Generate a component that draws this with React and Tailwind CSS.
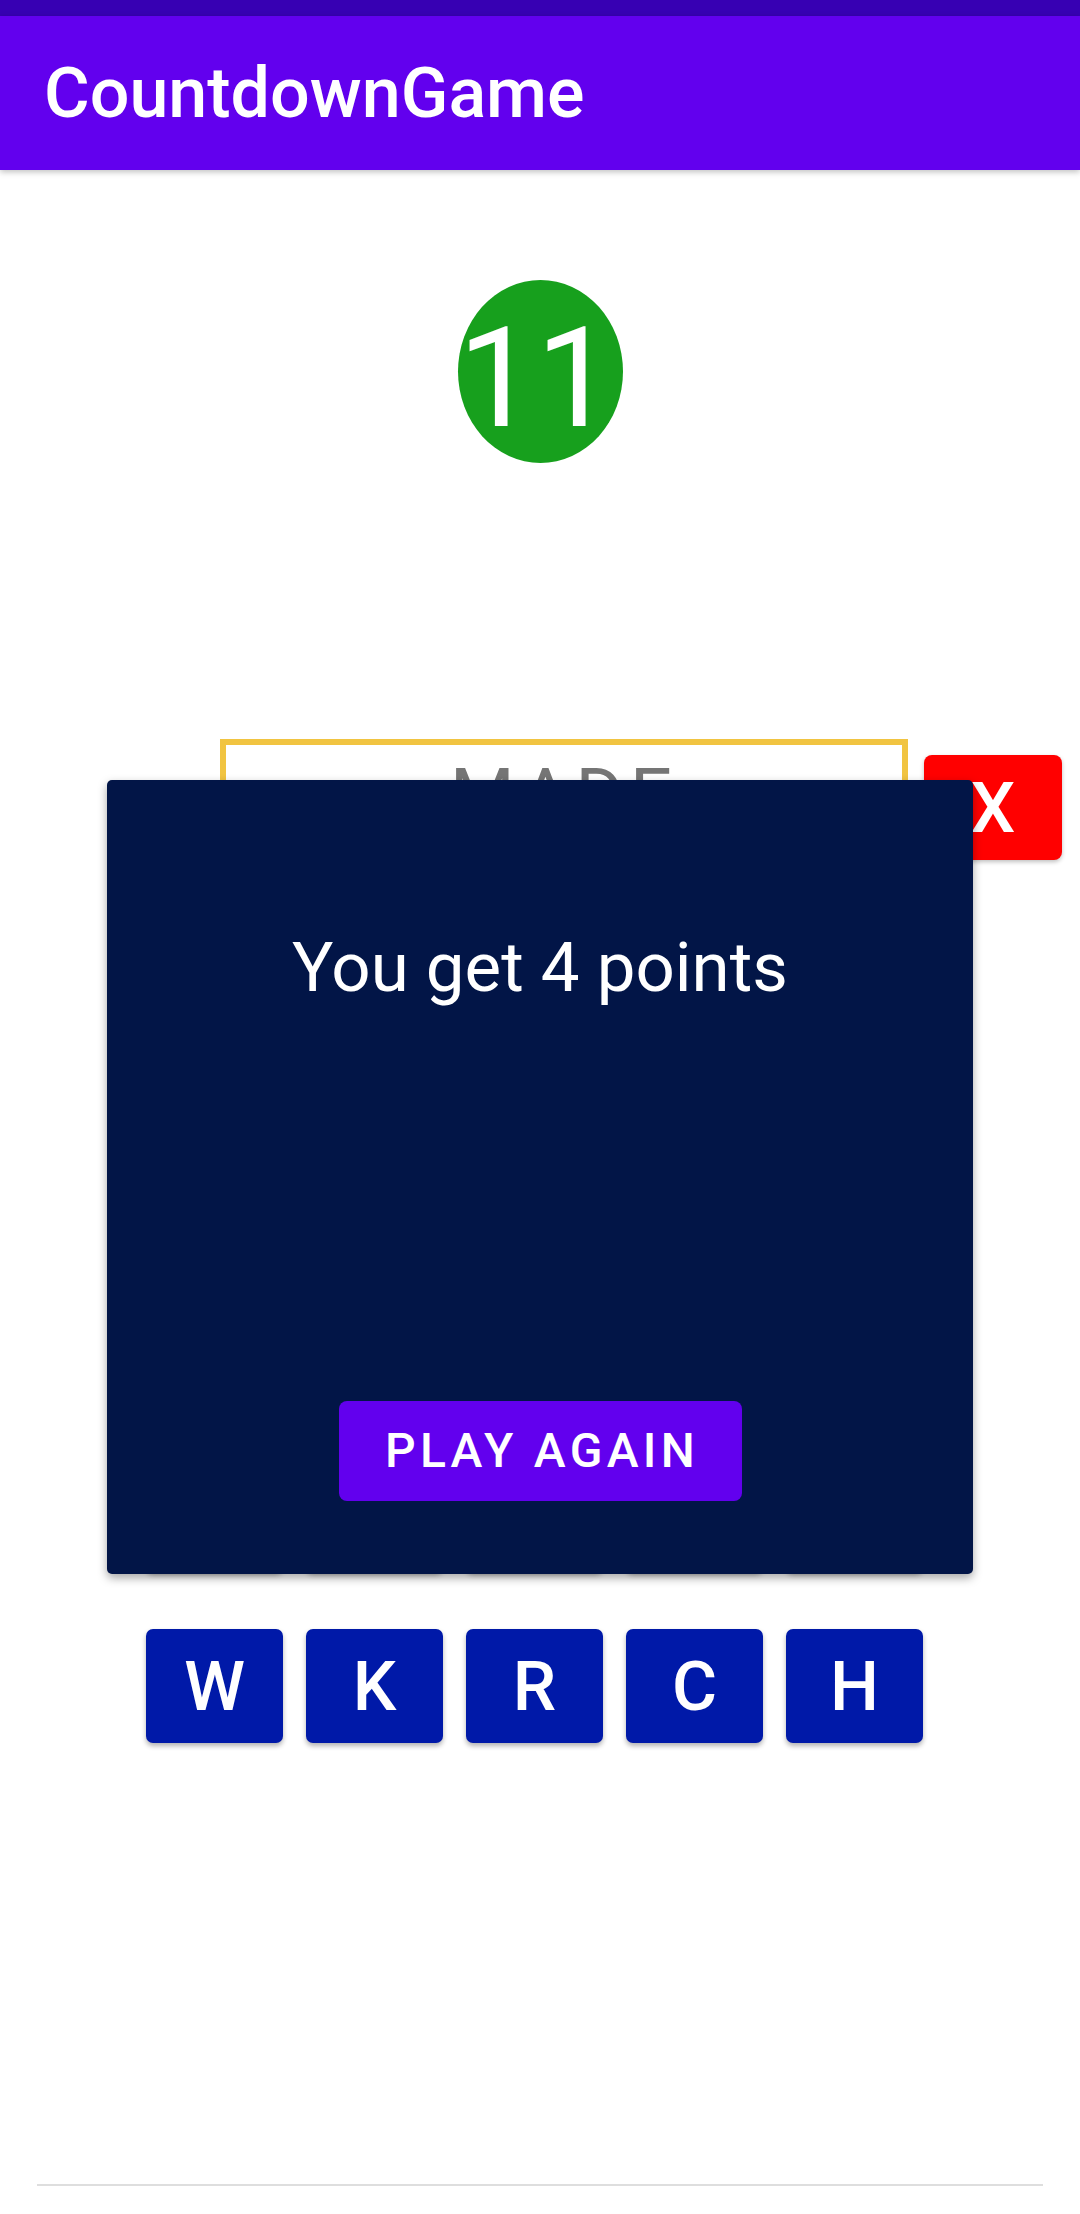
export default function App() {
  const letters = ["W", "K", "R", "C", "H"];
  return (
    <div className="relative w-[1080px] h-[2214px] overflow-hidden bg-white" style={{ fontFamily: "Roboto, 'Noto Sans', sans-serif" }}>
      <div className="h-[16px] bg-[#3700B3]" />
      <div className="relative z-10 h-[154px] bg-[#6200EE] flex items-center pl-[44px] shadow-[0_2px_6px_rgba(0,0,0,0.25)]">
        <span className="text-white text-[70px] font-medium leading-none">CountdownGame</span>
      </div>

      <div className="flex flex-col">
        <div className="flex justify-center mt-[110px]">
          <div className="w-[165px] h-[183px] rounded-[50%] bg-[#17a01d] flex items-center justify-center pt-[14px] pr-[8px]">
            <span className="text-white text-[139px] leading-none">11</span>
          </div>
        </div>

        <div className="flex items-start mt-[276px] pl-[220px]">
          <div className="w-[688px] h-[131px] border-[6px] border-[#f1c441] bg-white flex justify-center pt-[14px]">
            <span className="text-[#757575] text-[74px] leading-none tracking-[6px]">MADE</span>
          </div>
          <div className="ml-[16px] mt-[16px] w-[138px] h-[105px] rounded-[8px] bg-[#ff0000] flex items-center justify-center shadow-[0_2px_4px_rgba(0,0,0,0.25)]">
            <span className="text-white text-[71px] font-medium leading-none">X</span>
          </div>
        </div>

        <div className="flex gap-[23px] pl-[146px] mt-[588px]">
          {letters.map((l) => (
            <div key={"h" + l} className="w-[137px] h-[114px] rounded-[7px] bg-[#0019a8] shadow-[0_3px_5px_rgba(0,0,0,0.3)]" />
          ))}
        </div>

        <div className="flex gap-[23px] pl-[146px] mt-[57px]">
          {letters.map((l) => (
            <div key={l} className="w-[137px] h-[114px] rounded-[7px] bg-[#0019a8] flex items-center justify-center shadow-[0_3px_5px_rgba(0,0,0,0.3)]">
              <span className="text-white text-[69px] font-medium leading-none">{l}</span>
            </div>
          ))}
        </div>

        <div className="mt-[441px] mx-[37px] h-[2px] bg-[#dedede]" />
      </div>

      <div className="absolute left-[107px] top-[780px] w-[866px] h-[794px] rounded-[5px] bg-[#021547] shadow-[0_4px_10px_rgba(0,0,0,0.35)] flex flex-col items-center">
        <div className="mt-[153px] text-white text-[69px] leading-none">You get 4 points</div>
        <div className="mt-[399px] w-[403px] h-[100px] rounded-[8px] bg-[#6200EE] flex items-center justify-center">
          <span className="text-white text-[48px] font-medium leading-none tracking-[4.3px] pl-[4px]">PLAY AGAIN</span>
        </div>
      </div>
    </div>
  );
}
